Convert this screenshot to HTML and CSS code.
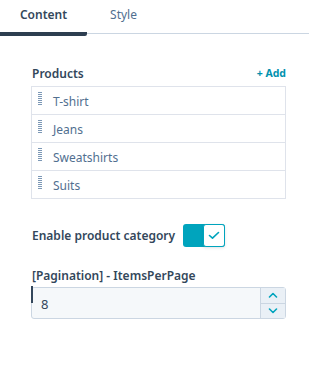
FILE: index.html
```html
<!DOCTYPE html>
<html lang="en">
<head>
    <meta charset="UTF-8">
    <meta name="viewport" content="width=device-width, initial-scale=1.0">
    <title>Module settings</title>
    <link rel="stylesheet" href="styles.css">
</head>
<body>
    <div class="tabs">
        <div class="tab active">Content</div>
        <div class="tab">Style</div>
    </div>

    <div class="panel">
        <div class="field-head">
            <div class="label">Products</div>
            <a class="add-link" href="#">+ Add</a>
        </div>
        <div class="list">
            <div class="list-row"><span class="grip"></span>T-shirt</div>
            <div class="list-row"><span class="grip"></span>Jeans</div>
            <div class="list-row"><span class="grip"></span>Sweatshirts</div>
            <div class="list-row"><span class="grip"></span>Suits</div>
        </div>

        <div class="toggle-field">
            <div class="label">Enable product category</div>
            <div class="toggle">
                <div class="toggle-track"></div>
                <div class="toggle-knob">
                    <svg width="12" height="9" viewBox="0 0 12 9">
                        <path d="M1.5 4.5 L4.5 7.2 L10.5 1.5" fill="none" stroke="#00a4bd" stroke-width="1.6" stroke-linecap="round" stroke-linejoin="round"/>
                    </svg>
                </div>
            </div>
        </div>

        <div class="label number-label">[Pagination] - ItemsPerPage</div>
        <div class="number-input">
            <span class="caret"></span>
            <div class="number-value">8</div>
            <div class="stepper">
                <div class="step">
                    <svg width="10" height="6" viewBox="0 0 10 6"><path d="M1.5 5 L5 1.5 L8.5 5" fill="none" stroke="#00a4bd" stroke-width="1.6" stroke-linecap="round" stroke-linejoin="round"/></svg>
                </div>
                <div class="step">
                    <svg width="10" height="6" viewBox="0 0 10 6"><path d="M1.5 1 L5 4.5 L8.5 1" fill="none" stroke="#00a4bd" stroke-width="1.6" stroke-linecap="round" stroke-linejoin="round"/></svg>
                </div>
            </div>
        </div>
    </div>
</body>
</html>
```

FILE: styles.css
```css
body {
    font-family: "Noto Sans", Arial, sans-serif;
    margin: 0;
    background-color: #fff;
    color: #33475b;
    font-size: 12px;
}

.tabs {
    display: flex;
    border-bottom: 1px solid #cbd6e2;
    height: 33px;
}

.tab {
    width: 87px;
    text-align: center;
    padding-top: 6px;
    box-sizing: border-box;
    font-size: 12px;
    color: #516f90;
}

.tab.active {
    color: #33475b;
    font-weight: 600;
    border-bottom: 4px solid #2d3e50;
    border-radius: 0 2px 2px 0;
    height: 36px;
}

.tab + .tab {
    width: 73px;
}

.panel {
    padding: 31px 23px 0 31px;
}

.field-head {
    display: flex;
    justify-content: space-between;
    align-items: center;
    padding-left: 1px;
    height: 16px;
    margin-bottom: 5px;
}

.label {
    font-weight: 600;
    font-size: 12px;
    color: #33475b;
}

.add-link {
    color: #0091ae;
    font-weight: 700;
    font-size: 10.5px;
    text-decoration: none;
}

.list {
    border: 1px solid #dfe3eb;
}

.list-row {
    display: flex;
    align-items: center;
    height: 27px;
    font-size: 12px;
    color: #516f90;
    padding-left: 6px;
    padding-top: 1px;
    box-sizing: border-box;
}

.list-row + .list-row {
    border-top: 1px solid #dfe3eb;
    height: 28px;
}

.grip {
    width: 4px;
    height: 14px;
    margin-right: 11px;
    margin-top: -4px;
    background-image: repeating-linear-gradient(to bottom, #7c98b6 0, #7c98b6 1px, transparent 1px, transparent 2px);
}

.toggle-field {
    display: flex;
    align-items: center;
    margin-top: 25px;
    padding-left: 1px;
}

.toggle {
    display: flex;
    margin-left: 8px;
    position: relative;
    width: 42px;
    height: 23px;
}

.toggle-track {
    width: 42px;
    height: 23px;
    background-color: #00a4bd;
    border-radius: 3px;
}

.toggle-knob {
    position: absolute;
    right: 0;
    top: 0;
    width: 22px;
    height: 23px;
    box-sizing: border-box;
    background-color: #fff;
    border: 1px solid #00a4bd;
    border-radius: 3px;
    display: flex;
    align-items: center;
    justify-content: center;
    box-shadow: 0 1px 3px rgba(45, 62, 80, 0.15);
}

.number-label {
    margin-top: 20px;
    margin-bottom: 3px;
    padding-left: 1px;
}

.number-input {
    display: flex;
    position: relative;
    height: 32px;
    border: 1px solid #cbd6e2;
    border-radius: 3px;
    background-color: #f5f8fa;
    box-sizing: border-box;
}

.caret {
    position: absolute;
    left: -1px;
    top: -2px;
    width: 2px;
    height: 17px;
    background-color: #33475b;
}

.number-value {
    flex: 1;
    font-size: 13px;
    padding-left: 9px;
    display: flex;
    align-items: center;
    padding-top: 2px;
}

.stepper {
    width: 24px;
    border-left: 1px solid #cbd6e2;
    display: flex;
    flex-direction: column;
}

.step {
    flex: 1;
    display: flex;
    align-items: center;
    justify-content: center;
    background-color: #eaf0f6;
}

.step + .step {
    border-top: 1px solid #cbd6e2;
}
```
